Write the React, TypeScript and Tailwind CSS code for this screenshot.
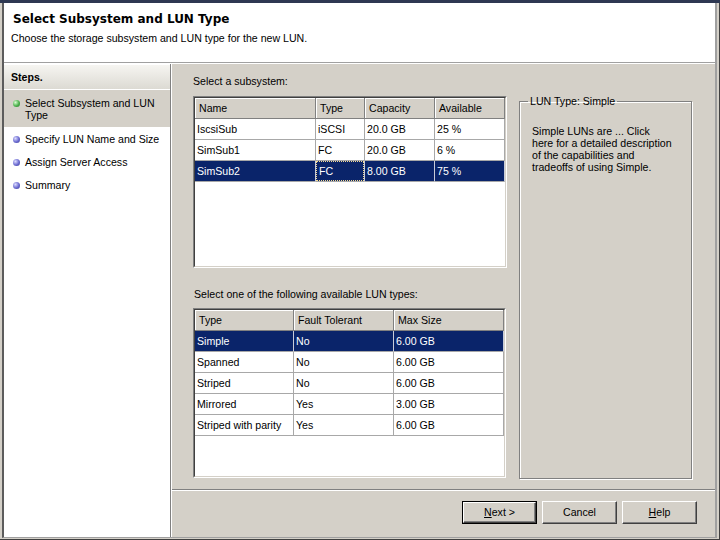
import React from "react";

const ui = "font-['Liberation_Sans',Arial,sans-serif] text-[10.6px] leading-[13px]";

type Col = { label: string; w: number };

const subsystemCols: Col[] = [
  { label: "Name", w: 121 },
  { label: "Type", w: 49 },
  { label: "Capacity", w: 70 },
  { label: "Available", w: 70 },
];

const subsystemRows = [
  ["IscsiSub", "iSCSI", "20.0 GB", "25 %"],
  ["SimSub1", "FC", "20.0 GB", "6 %"],
  ["SimSub2", "FC", "8.00 GB", "75 %"],
];

const lunCols: Col[] = [
  { label: "Type", w: 99 },
  { label: "Fault Tolerant", w: 100 },
  { label: "Max Size", w: 110 },
];

const lunRows = [
  ["Simple", "No", "6.00 GB"],
  ["Spanned", "No", "6.00 GB"],
  ["Striped", "No", "6.00 GB"],
  ["Mirrored", "Yes", "3.00 GB"],
  ["Striped with parity", "Yes", "6.00 GB"],
];

function ListGrid({
  cols,
  rows,
  selected,
  focusCol,
  width,
  height,
}: {
  cols: Col[];
  rows: string[][];
  selected: number;
  focusCol?: number;
  width: string;
  height: string;
}) {
  return (
    <div className={`${width} ${height} border border-t-[#808080] border-l-[#808080] border-r-white border-b-white`}>
      <div className="h-full w-full border border-t-[#404040] border-l-[#404040] border-r-[#d4d0c8] border-b-[#d4d0c8] bg-white overflow-hidden">
        <div className="flex">
          {cols.map((c) => (
            <div
              key={c.label}
              style={{ width: c.w }}
              className="h-[21px] shrink-0 flex items-center pl-[4px] bg-[#d4d0c8] border-r border-b border-r-[#808080] border-b-[#808080] shadow-[inset_1px_1px_0_#ffffff] text-black"
            >
              {c.label}
            </div>
          ))}
        </div>
        {rows.map((r, i) => {
          const sel = i === selected;
          return (
            <div key={i} className={`flex ${sel ? "bg-[#0a246a] text-white" : "text-black"}`}>
              {r.map((cell, j) => (
                <div
                  key={j}
                  style={{ width: cols[j].w }}
                  className={`h-[21px] shrink-0 border-b border-r ${
                    sel ? "border-r-[#c8ccd8] border-b-[#a8a8a8]" : "border-[#a8a8a8]"
                  }`}
                >
                  <div
                    className={`h-full flex items-center pl-[2px] ${
                      sel && j === focusCol ? "border border-dotted border-[#f5db95] pl-[1px]" : ""
                    }`}
                  >
                    {cell}
                  </div>
                </div>
              ))}
            </div>
          );
        })}
      </div>
    </div>
  );
}

function Bullet({ active }: { active?: boolean }) {
  return (
    <span
      className={`mt-[3px] h-[7px] w-[7px] shrink-0 rounded-full ${
        active
          ? "bg-[radial-gradient(circle_at_35%_35%,#d8ffd0,#4cb04c_55%,#2a7a2a)]"
          : "bg-[radial-gradient(circle_at_35%_35%,#dcdcff,#6a6ad0_55%,#3a3a90)]"
      }`}
    />
  );
}

function Button({ children, isDefault }: { children: React.ReactNode; isDefault?: boolean }) {
  const face = (
    <div className="h-full w-full flex items-center justify-center bg-[#d4d0c8] border border-t-white border-l-white border-r-[#404040] border-b-[#404040] shadow-[inset_-1px_-1px_0_#808080] text-black">
      {children}
    </div>
  );
  return isDefault ? (
    <div className="h-[23px] w-[75px] border border-black">{face}</div>
  ) : (
    <div className="h-[23px] w-[75px]">{face}</div>
  );
}

export default function App() {
  return (
    <div className={`${ui} w-[720px] h-[540px] flex flex-col bg-[#d4d0c8] border-t-[3px] border-t-[#2e3852] pl-[2px] pr-[3px] pb-[2px] shadow-[inset_-1px_-1px_0_#404040]`}>
      <div className="flex-1 flex flex-col min-h-0 border-l-[2px] border-l-[#5c5c5c] border-r-[2px] border-r-[#a0a0a0] border-b border-b-[#a0a0a0]">
        <header className="h-[59px] shrink-0 bg-white pt-[9px]">
          <div className="pl-[9px] font-['DejaVu_Sans',Verdana,sans-serif] font-bold text-[12px] leading-[15px] text-black">
            Select Subsystem and LUN Type
          </div>
          <div className="pl-[7px] mt-[5px] text-black">
            Choose the storage subsystem and LUN type for the new LUN.
          </div>
        </header>
        <div className="h-[2px] shrink-0 border-t border-t-[#a0a0a0] border-b border-b-white" />

        <div className="flex-1 flex min-h-0">
          <aside className="w-[166px] shrink-0 bg-white pt-[1px]">
            <div className="h-[24px] flex items-center pl-[7px] font-bold bg-[linear-gradient(#f6f5f1,#dcdad3)] text-black">
              Steps.
            </div>
            <div className="mt-[1px] h-[37px] bg-[#d4d0c8] flex gap-[5px] pl-[9px] pt-[7px] leading-[12px] text-black">
              <Bullet active />
              <span>
                Select Subsystem and LUN
                <br />
                Type
              </span>
            </div>
            {["Specify LUN Name and Size", "Assign Server Access", "Summary"].map((s) => (
              <div key={s} className="h-[23px] flex gap-[5px] pl-[9px] pt-[6px] leading-[12px] text-black">
                <Bullet />
                <span>{s}</span>
              </div>
            ))}
          </aside>

          <div className="w-[2px] shrink-0 border-l border-l-[#808080] border-r border-r-white" />

          <main className="flex-1 flex flex-col min-w-0">
            <div className="h-[425px] shrink-0 flex pl-[21px] pt-[11px]">
              <div className="w-[314px] shrink-0">
                <div className="text-black">Select a subsystem:</div>
                <div className="mt-[8px]">
                  <ListGrid
                    cols={subsystemCols}
                    rows={subsystemRows}
                    selected={2}
                    focusCol={1}
                    width="w-[314px]"
                    height="h-[172px]"
                  />
                </div>
                <div className="mt-[20px] pl-[1px] text-black">Select one of the following available LUN types:</div>
                <div className="mt-[7px]">
                  <ListGrid cols={lunCols} rows={lunRows} selected={0} width="w-[313px]" height="h-[170px]" />
                </div>
              </div>

              <fieldset className="ml-[12px] mt-[20px] w-[173px] h-[384px] border border-[#808080] shadow-[inset_1px_1px_0_#ffffff,1px_1px_0_#ffffff] pl-[12px] pr-[6px]">
                <legend className="ml-[-4px] px-[2px] text-black">LUN Type: Simple</legend>
                <p className="mt-[17px] leading-[12px] text-black">
                  Simple LUNs are ... Click
                  <br />
                  here for a detailed description
                  <br />
                  of the capabilities and
                  <br />
                  tradeoffs of using Simple.
                </p>
              </fieldset>
            </div>

            <div className="h-[2px] shrink-0 border-t border-t-[#808080] border-b border-b-white" />

            <div className="flex justify-end gap-[5px] pr-[18px] pt-[10px]">
              <Button isDefault>
                <span>
                  <u>N</u>ext &gt;
                </span>
              </Button>
              <Button>Cancel</Button>
              <Button>
                <span>
                  <u>H</u>elp
                </span>
              </Button>
            </div>
          </main>
        </div>
      </div>
    </div>
  );
}
